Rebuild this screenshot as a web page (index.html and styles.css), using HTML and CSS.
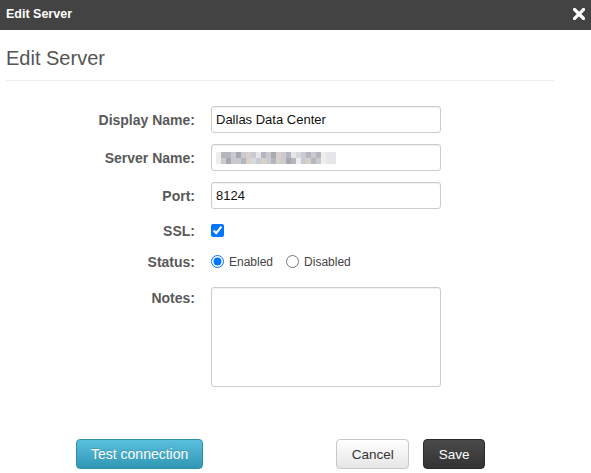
FILE: index.html
```html
<!DOCTYPE html>
<html>
<head>
<meta charset="utf-8">
<link rel="stylesheet" href="styles.css">
</head>
<body>
<div class="titlebar">
  <span class="title">Edit Server</span>
  <svg class="close" width="12" height="12" viewBox="0 0 12 12"><path d="M1.5 1.5 L10.5 10.5 M10.5 1.5 L1.5 10.5" stroke="#fff" stroke-width="3.2" stroke-linecap="square"/></svg>
</div>
<div class="body">
  <h2 class="heading">Edit Server</h2>
  <form class="form">
    <div class="row row-field">
      <label class="label">Display Name:</label>
      <input class="input" type="text" value="Dallas Data Center">
    </div>
    <div class="row row-field">
      <label class="label">Server Name:</label>
      <div class="input input-blur">
        <div class="blur">
          <span class="g7"></span><span class="g3"></span><span class="g3"></span><span class="g2"></span><span class="g5"></span><span class="g2"></span><span class="g4"></span><span class="g2"></span><span class="g1"></span><span class="g3"></span><span class="g2"></span><span class="g5"></span><span class="g4"></span><span class="g2"></span><span class="g3"></span><span class="g1"></span><span class="g6"></span><span class="g2"></span><span class="g3"></span><span class="g2"></span><span class="g3"></span><span class="g7"></span><span class="g1"></span><span class="g1"></span>
          <span class="g7"></span><span class="g2"></span><span class="g5"></span><span class="g2"></span><span class="g2"></span><span class="g3"></span><span class="g4"></span><span class="g6"></span><span class="g2"></span><span class="g4"></span><span class="g2"></span><span class="g3"></span><span class="g4"></span><span class="g2"></span><span class="g5"></span><span class="g3"></span><span class="g7"></span><span class="g2"></span><span class="g4"></span><span class="g3"></span><span class="g2"></span><span class="g7"></span><span class="g1"></span><span class="g1"></span>
        </div>
      </div>
    </div>
    <div class="row row-field">
      <label class="label">Port:</label>
      <input class="input" type="text" value="8124">
    </div>
    <div class="row row-check">
      <label class="label">SSL:</label>
      <input class="check" type="checkbox" checked>
    </div>
    <div class="row row-radio">
      <label class="label">Status:</label>
      <div class="radios">
        <label class="radio-label"><input class="radio" type="radio" name="status" checked>Enabled</label>
        <label class="radio-label"><input class="radio" type="radio" name="status">Disabled</label>
      </div>
    </div>
    <div class="row row-notes">
      <label class="label label-top">Notes:</label>
      <textarea class="textarea"></textarea>
    </div>
  </form>
  <div class="footer">
    <button class="btn btn-info">Test connection</button>
    <div class="footer-right">
      <button class="btn btn-default">Cancel</button>
      <button class="btn btn-inverse">Save</button>
    </div>
  </div>
</div>
</body>
</html>
```

FILE: styles.css
```css
html, body {
  margin: 0;
  padding: 0;
  background: #fff;
  font-family: "Liberation Sans", Arial, sans-serif;
}
.titlebar {
  height: 30px;
  background: #434343;
  display: flex;
  align-items: center;
  justify-content: space-between;
  padding: 0 6px;
}
.title {
  color: #fff;
  font-weight: bold;
  font-size: 12.5px;
  margin-top: -2px;
}
.close {
  display: block;
  margin-top: -3px;
}
.body {
  padding: 0 37px 0 6px;
}
.heading {
  margin: 16px 0 0;
  font-size: 20px;
  line-height: 24px;
  font-weight: normal;
  color: #555;
  padding-bottom: 10px;
  border-bottom: 1px solid #eee;
}
.form {
  margin: 25px 0 0;
  display: flex;
  flex-direction: column;
}
.row {
  display: flex;
  align-items: center;
  gap: 16px;
}
.row-field {
  height: 27px;
  margin-bottom: 11px;
}
.row-check {
  height: 21px;
  margin-bottom: 11px;
}
.row-radio {
  height: 19px;
  margin-bottom: 16px;
}
.row-notes {
  align-items: flex-start;
}
.label {
  width: 189px;
  text-align: right;
  font-weight: bold;
  font-size: 14px;
  color: #595959;
  flex: none;
}
.label-top {
  padding-top: 3px;
}
.input {
  box-sizing: border-box;
  width: 230px;
  height: 27px;
  border: 1px solid #ccc;
  border-radius: 3px;
  padding: 0 4px;
  font-family: "Liberation Sans", Arial, sans-serif;
  font-size: 13px;
  color: #111;
  background: #fff;
  box-shadow: inset 0 1px 1px rgba(0,0,0,0.06);
  outline: none;
  margin: 0;
}
.input-blur {
  display: flex;
  align-items: center;
}
.blur {
  display: grid;
  grid-template-columns: repeat(24, 5px);
  grid-auto-rows: 6px;
}
.blur span { display: block; }
.g1 { background: #e6e6ea; }
.g2 { background: #cacad2; }
.g3 { background: #b6b6be; }
.g4 { background: #d9d0c9; }
.g5 { background: #a8a8af; }
.g6 { background: #d3dcd9; }
.g7 { background: #f0eeec; }
.check {
  margin: 0;
  width: 13px;
  height: 13px;
  accent-color: #0075ff;
}
.radios {
  display: flex;
  align-items: center;
  gap: 13px;
}
.radio-label {
  display: flex;
  align-items: center;
  gap: 5px;
  font-size: 12px;
  color: #444;
}
.radio {
  margin: 0;
  width: 13px;
  height: 13px;
  accent-color: #0075ff;
}
.textarea {
  box-sizing: border-box;
  width: 230px;
  height: 100px;
  border: 1px solid #ccc;
  border-radius: 3px;
  margin: 0;
  resize: none;
  box-shadow: inset 0 1px 1px rgba(0,0,0,0.06);
  outline: none;
}
.footer {
  margin-top: 52px;
  display: flex;
  align-items: center;
  padding: 0 69px 0 70px;
}
.footer-right {
  margin-left: auto;
  display: flex;
  gap: 14px;
}
.btn {
  box-sizing: border-box;
  height: 30px;
  padding: 0 15px;
  border-radius: 4px;
  font-family: "Liberation Sans", Arial, sans-serif;
  font-size: 13.5px;
  cursor: pointer;
  margin: 0;
}
.btn-info {
  font-size: 14px;
  padding: 0 14px;
  color: #fff;
  background: linear-gradient(to bottom, #5bc0de, #2f96b4);
  border: 1px solid #2f8fab;
  text-shadow: 0 -1px 0 rgba(0,0,0,0.15);
}
.btn-default {
  padding: 0 14.5px;
  color: #333;
  background: linear-gradient(to bottom, #ffffff, #e6e6e6);
  border: 1px solid #c8c8c8;
  box-shadow: 0 1px 1px rgba(0,0,0,0.05);
}
.btn-inverse {
  padding: 0 14.5px;
  color: #fff;
  background: linear-gradient(to bottom, #4a4a4a, #333);
  border: 1px solid #2a2a2a;
}
```
